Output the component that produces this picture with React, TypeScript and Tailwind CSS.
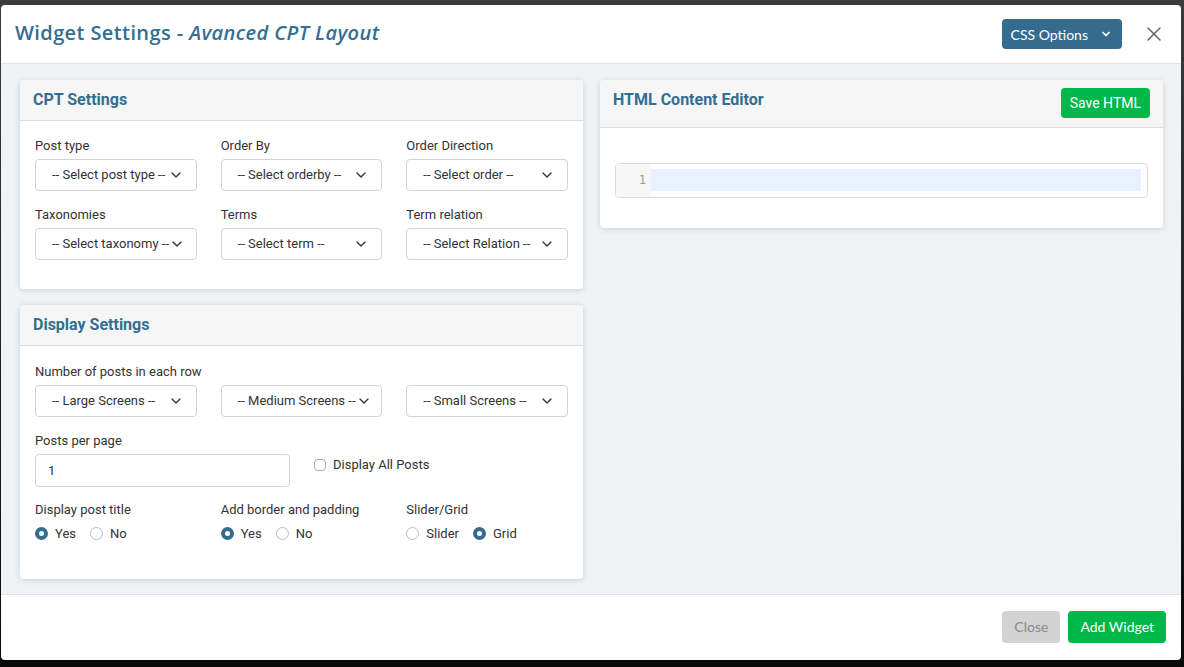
import { ChevronDown, X } from "lucide-react"

const font = { fontFamily: "Roboto, 'Liberation Sans', sans-serif" }

function Select({ label }: { label: string }) {
  return (
    <div className="flex h-8 items-center justify-between rounded border border-[#ced4da] bg-white pl-4 pr-3 text-[13px] text-[#333]">
      <span className="whitespace-nowrap">{label}</span>
      <ChevronDown className="h-4 w-4 shrink-0 text-[#333]" strokeWidth={2} />
    </div>
  )
}

function Field({ label, select }: { label: string; select: string }) {
  return (
    <div>
      <div className="mb-[5px] text-[13px] leading-4 text-[#333]">{label}</div>
      <Select label={select} />
    </div>
  )
}

function Radio({ label, checked }: { label: string; checked?: boolean }) {
  return (
    <label className="flex items-center gap-[7px] text-[13px] text-[#333]">
      <span
        className={
          checked
            ? "h-[13px] w-[13px] rounded-full border-[4px] border-[#356c8e] bg-white"
            : "h-[13px] w-[13px] rounded-full border border-[#bbb] bg-white"
        }
      />
      {label}
    </label>
  )
}

function RadioGroup({ label, options, checked }: { label: string; options: string[]; checked: number }) {
  return (
    <div>
      <div className="mb-[6px] text-[13px] leading-4 text-[#333]">{label}</div>
      <div className="flex items-center gap-[14px]">
        {options.map((o, i) => (
          <Radio key={o} label={o} checked={i === checked} />
        ))}
      </div>
    </div>
  )
}

function Card({ title, action, children }: { title: string; action?: React.ReactNode; children: React.ReactNode }) {
  return (
    <div className="rounded bg-white shadow-[0_1px_6px_rgba(0,0,0,0.15)]">
      <div className="flex items-start justify-between rounded-t border-b border-[#dcdcdc] bg-[#f6f6f6] px-[13px]">
        <h3 className="py-[9px] text-[16px] font-bold leading-[22px] text-[#336e93]">{title}</h3>
        {action}
      </div>
      {children}
    </div>
  )
}

export default function App() {
  return (
    <div className="h-[667px] w-[1184px] overflow-hidden bg-gradient-to-b from-[#3c3c3c] to-[#0a0a0a] pl-px pr-[3px] pt-[5px]" style={font}>
      <div className="flex h-[655px] flex-col overflow-hidden rounded bg-white">
        {/* header */}
        <div className="flex h-[59px] shrink-0 items-center justify-between border-b border-[#dee2e6] pl-[14px] pr-[15px]">
          <h2 className="mb-[2px] text-[20px] font-semibold tracking-[0.4px] text-[#336e93]" style={{ fontFamily: "'Open Sans', Lato, sans-serif" }}>
            Widget Settings - <em>Avanced CPT Layout</em>
          </h2>
          <div className="flex items-center gap-[20px]">
            <button className="flex h-[30px] items-center gap-[12px] rounded bg-[#356c8e] pl-[9px] pr-[10px] text-[14px] text-white" style={{ fontFamily: "Lato, sans-serif" }}>
              CSS Options
              <ChevronDown className="h-3 w-3" strokeWidth={3.5} />
            </button>
            <X className="h-6 w-6 text-[#666]" strokeWidth={1.5} />
          </div>
        </div>

        {/* body */}
        <div className="flex min-h-0 flex-1 gap-[17px] bg-[#eff3f6] pl-[19px] pr-[18px] pt-4">
          <div className="flex w-[563px] flex-col gap-4">
            <Card title="CPT Settings">
              <div className="grid grid-cols-3 gap-x-6 gap-y-[16px] px-[15px] pb-[29px] pt-[17px]">
                <Field label="Post type" select="-- Select post type --" />
                <Field label="Order By" select="-- Select orderby --" />
                <Field label="Order Direction" select="-- Select order --" />
                <Field label="Taxonomies" select="-- Select taxonomy --" />
                <Field label="Terms" select="-- Select term --" />
                <Field label="Term relation" select="-- Select Relation --" />
              </div>
            </Card>

            <Card title="Display Settings">
              <div className="px-[15px] pb-[35px] pt-[18px]">
                <div className="mb-[5px] text-[13px] leading-4 text-[#333]">Number of posts in each row</div>
                <div className="grid grid-cols-3 gap-x-6">
                  <Select label="-- Large Screens --" />
                  <Select label="-- Medium Screens --" />
                  <Select label="-- Small Screens --" />
                </div>
                <div className="mt-[16px] flex items-center gap-6">
                  <div className="w-[255px]">
                    <div className="mb-[5px] text-[13px] leading-4 text-[#333]">Posts per page</div>
                    <div className="flex h-[33px] items-center rounded border border-[#ced4da] px-3 text-[13px] text-[#333]">1</div>
                  </div>
                  <label className="mt-[10px] flex items-center gap-[7px] text-[13px] text-[#333]">
                    <span className="h-[12px] w-[12px] rounded-sm border border-[#aaa] bg-white" />
                    Display All Posts
                  </label>
                </div>
                <div className="mt-[15px] grid grid-cols-3 gap-x-6">
                  <RadioGroup label="Display post title" options={["Yes", "No"]} checked={0} />
                  <RadioGroup label="Add border and padding" options={["Yes", "No"]} checked={0} />
                  <RadioGroup label="Slider/Grid" options={["Slider", "Grid"]} checked={1} />
                </div>
              </div>
            </Card>
          </div>

          <div className="w-[563px] self-start">
            <Card
              title="HTML Content Editor"
              action={
                <button className="mb-[9px] mt-[8px] h-[30px] rounded bg-[#00b74a] px-[9px] text-[14px] text-white">Save HTML</button>
              }
            >
              <div className="px-[15px] pb-[30px] pt-[35px]">
                <div className="flex h-[35px] overflow-hidden rounded border border-[#dcdcdc]">
                  <div className="w-[35px] bg-[#f7f7f7] pr-[5px] pt-[8px] text-right text-[12px] leading-4 text-[#999]" style={{ fontFamily: "'DejaVu Sans Mono', monospace" }}>
                    1
                  </div>
                  <div className="flex-1 py-[5px] pr-[6px]">
                    <div className="h-[22px] bg-[#e8f2fe]" />
                  </div>
                </div>
              </div>
            </Card>
          </div>
        </div>

        {/* footer */}
        <div className="flex h-[66px] shrink-0 items-center justify-end gap-2 border-t border-[#dee2e6] pb-[2px] pr-[15px]">
          <button className="h-[32px] rounded bg-[#d3d3d3] px-[12px] text-[14px] text-[#888]" style={{ fontFamily: "Lato, sans-serif" }}>
            Close
          </button>
          <button className="h-[32px] rounded bg-[#00b74a] px-[12px] text-[14px] text-white" style={{ fontFamily: "Lato, sans-serif" }}>
            Add Widget
          </button>
        </div>
      </div>
    </div>
  )
}
